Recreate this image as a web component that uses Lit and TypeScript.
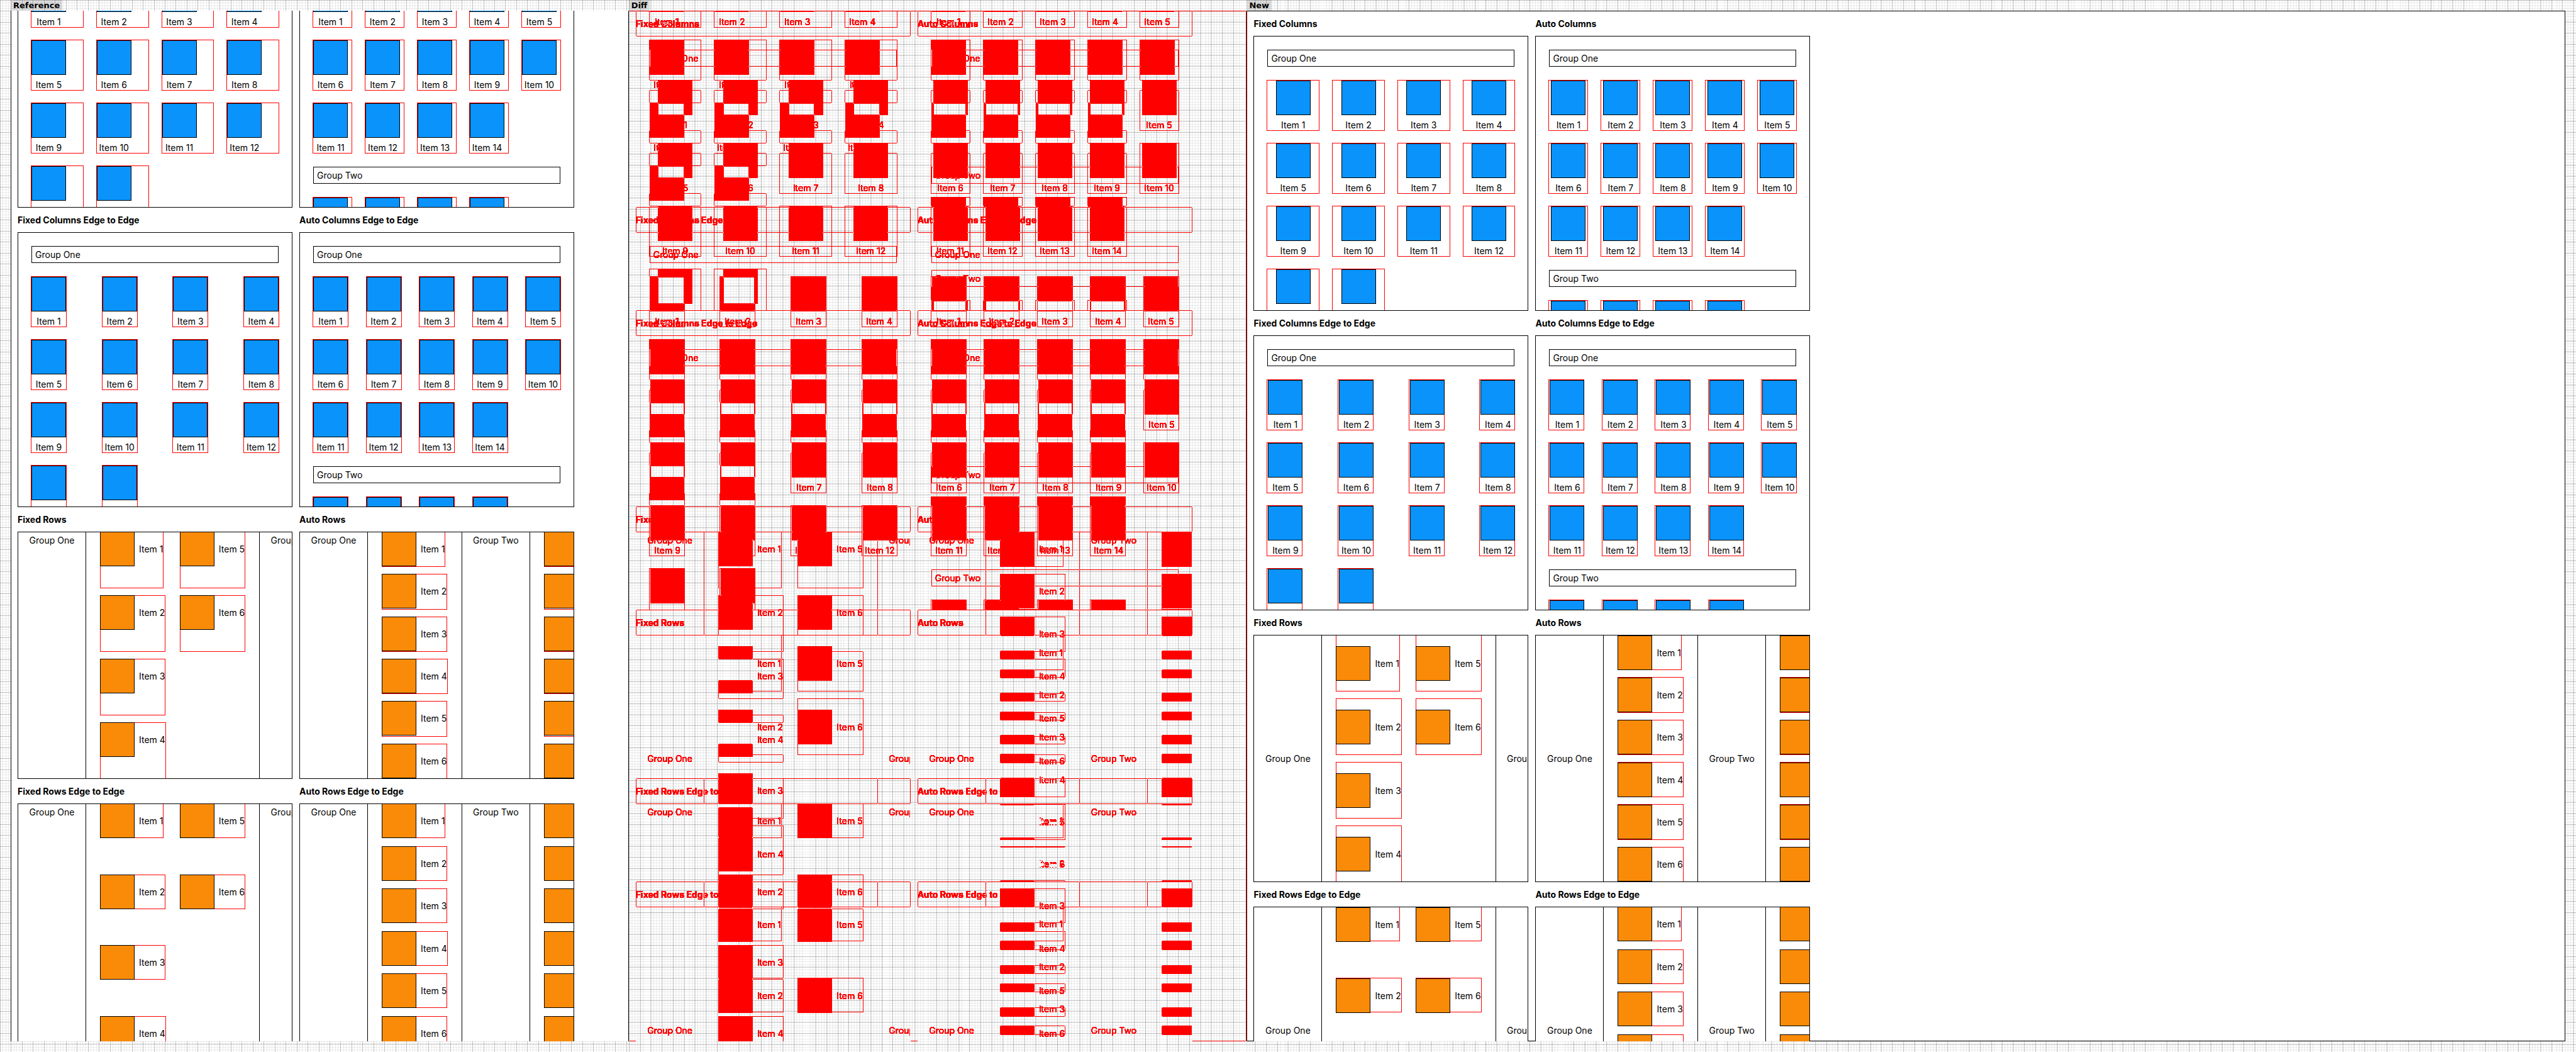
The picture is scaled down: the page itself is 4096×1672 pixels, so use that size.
import { LitElement, html, css, svg } from "lit";
import { customElement, property } from "lit/decorators.js";
import { classMap } from "lit/directives/class-map.js";

type Variant = "start" | "center";

interface Group {
  name: string;
  count: number;
}

interface Panel {
  title: string;
  axis: "columns" | "rows";
  sizing: "fixed" | "auto";
  edge: boolean;
  groups: Group[];
}

const COLUMN_GROUPS: Group[] = [
  { name: "Group One", count: 14 },
  { name: "Group Two", count: 4 },
];

const ROW_GROUPS: Group[] = [
  { name: "Group One", count: 6 },
  { name: "Group Two", count: 6 },
];

const PANELS: Panel[] = [
  { title: "Fixed Columns", axis: "columns", sizing: "fixed", edge: false, groups: COLUMN_GROUPS },
  { title: "Auto Columns", axis: "columns", sizing: "auto", edge: false, groups: COLUMN_GROUPS },
  { title: "Fixed Columns Edge to Edge", axis: "columns", sizing: "fixed", edge: true, groups: COLUMN_GROUPS },
  { title: "Auto Columns Edge to Edge", axis: "columns", sizing: "auto", edge: true, groups: COLUMN_GROUPS },
  { title: "Fixed Rows", axis: "rows", sizing: "fixed", edge: false, groups: ROW_GROUPS },
  { title: "Auto Rows", axis: "rows", sizing: "auto", edge: false, groups: ROW_GROUPS },
  { title: "Fixed Rows Edge to Edge", axis: "rows", sizing: "fixed", edge: true, groups: ROW_GROUPS },
  { title: "Auto Rows Edge to Edge", axis: "rows", sizing: "auto", edge: true, groups: ROW_GROUPS },
];

/** One page of layout samples; `variant` selects how cells align in their items. */
@customElement("layout-sheet")
export class LayoutSheet extends LitElement {
  @property() variant: Variant = "center";

  static styles = css`
    :host {
      display: block;
      box-sizing: border-box;
      background: #fff;
      box-shadow: inset 0 0 0 1px #000;
      padding: 1px 11px;
      font-family: Inter, "Liberation Sans", sans-serif;
      font-size: 14px;
      line-height: 17px;
      color: #000;
    }
    .sheet {
      display: grid;
      grid-template-columns: 437px 437px;
      column-gap: 11px;
    }
    .title {
      margin: 0;
      font-size: 14px;
      line-height: 39px;
      font-weight: 700;
    }
    .panel {
      box-sizing: border-box;
      border: 1px solid #000;
      background: #fff;
      overflow: hidden;
      display: flex;
    }
    .panel.columns {
      height: 437px;
      padding: 21px;
      flex-direction: column;
      gap: 22px;
    }
    .panel.rows {
      height: 393px;
    }
    .group {
      box-sizing: border-box;
      border: 1px solid #000;
      flex: none;
      white-space: nowrap;
    }
    .columns .group {
      padding: 4px 5px;
      line-height: 17px;
    }
    .items {
      display: grid;
      flex: none;
    }
    .columns .items {
      gap: 21px 22px;
      grid-auto-rows: 79px;
      grid-template-columns: repeat(4, 1fr);
    }
    .columns.auto .items {
      grid-template-columns: repeat(5, 1fr);
    }
    .columns.edge .items {
      column-gap: 0;
      justify-content: space-between;
      grid-template-columns: repeat(4, 55px);
    }
    .columns.edge.auto .items {
      grid-template-columns: repeat(5, 55px);
    }

    .lane {
      display: flex;
      gap: 22px;
      flex: none;
      margin: -1px;
    }
    .rows .group {
      width: 109px;
      border-width: 0 1px;
      padding: 5px 0;
      display: flex;
      justify-content: center;
    }
    .rows .items {
      gap: 11px 22px;
      grid-auto-flow: column;
      grid-template-rows: repeat(4, 1fr);
      justify-items: start;
    }
    .rows.auto .items {
      grid-template-rows: repeat(6, 1fr);
    }
    .rows.edge .items {
      row-gap: 0;
      align-content: space-between;
      grid-template-rows: repeat(4, 55px);
    }
    .rows.edge.auto .items {
      grid-template-rows: repeat(6, 55px);
    }
    .center.rows .group {
      align-items: center;
    }

    .item {
      display: flex;
      min-width: 0;
      min-height: 0;
    }
    .columns .item {
      outline: 1px solid #f00;
    }
    .rows .item {
      box-sizing: border-box;
      border: 1px solid #f00;
      align-items: flex-start;
    }
    .center.columns .item {
      justify-content: center;
    }
    .center.columns.edge .item {
      justify-content: flex-start;
      padding-left: 1px;
    }
    .center.rows .item {
      align-items: center;
    }
    .center.rows.edge.fixed .item {
      align-items: flex-start;
    }

    .cell {
      display: flex;
      flex: none;
      align-items: center;
      gap: 7px;
    }
    .columns .cell {
      flex-direction: column;
      width: 55px;
    }
    .rows .cell {
      margin: -1px 0 -1px -1px;
    }
    .center.rows.edge.fixed .cell {
      margin-top: 0;
    }
    .square {
      box-sizing: border-box;
      position: relative;
      width: 55px;
      height: 55px;
      border: 1px solid #000;
      background: #0a93fa;
    }
    .rows .square {
      background: #f98b08;
    }
    .label {
      white-space: nowrap;
    }
  `;

  private renderItems(count: number) {
    return html`<div class="items">
      ${Array.from(
        { length: count },
        (_, i) => html`<div class="item">
          <div class="cell"><span class="square"></span><span class="label">Item ${i + 1}</span></div>
        </div>`,
      )}
    </div>`;
  }

  private renderPanel(panel: Panel) {
    const classes = {
      panel: true,
      [panel.axis]: true,
      [panel.sizing]: true,
      edge: panel.edge,
      [this.variant]: true,
    };
    const groups = panel.groups.map(
      (group) => html`<div class="group">${group.name}</div>
        ${this.renderItems(group.count)}`,
    );
    return html`<section>
      <h2 class="title">${panel.title}</h2>
      <div class=${classMap(classes)}>
        ${panel.axis === "rows" ? html`<div class="lane">${groups}</div>` : groups}
      </div>
    </section>`;
  }

  render() {
    return html`<div class="sheet">${PANELS.map((panel) => this.renderPanel(panel))}</div>`;
  }
}

/** Side-by-side comparison: reference sheet, their difference, and the new sheet. */
@customElement("app-root")
export class AppRoot extends LitElement {
  static styles = css`
    :host {
      display: block;
    }
    .board,
    .rest {
      --major: calc(100vw / 234.5);
      --minor: calc(100vw / 938);
      background-color: #fff;
      background-image: repeating-linear-gradient(to right, rgba(0, 0, 0, 0.18) 0 1px, transparent 1px var(--major)),
        repeating-linear-gradient(to bottom, rgba(0, 0, 0, 0.18) 0 1px, transparent 1px var(--major)),
        repeating-linear-gradient(to right, rgba(0, 0, 0, 0.07) 0 1px, transparent 1px var(--minor)),
        repeating-linear-gradient(to bottom, rgba(0, 0, 0, 0.07) 0 1px, transparent 1px var(--minor));
    }
    .board {
      box-sizing: border-box;
      height: 100vh;
      padding-left: 17px;
      display: grid;
      grid-template-columns: minmax(0, 1800fr) minmax(0, 5672fr);
      overflow: hidden;
    }
    .rest {
      box-sizing: border-box;
      padding-right: 17px;
      display: grid;
      grid-template-columns: minmax(0, 1800fr) minmax(0, 3840fr);
      min-height: 0;
    }
    .pane {
      display: flex;
      flex-direction: column;
      align-items: stretch;
      min-height: 0;
      height: 100vh;
      box-sizing: border-box;
      padding-bottom: 17px;
    }
    .tab {
      align-self: flex-start;
      flex: none;
      margin: 0;
      padding: 0 4px;
      background: rgba(0, 0, 0, 0.13);
      font: 700 13px/17px "DejaVu Sans", sans-serif;
      color: #000;
    }
    .frame {
      flex: 1;
      min-height: 0;
      overflow: hidden;
      display: grid;
      grid-template-columns: minmax(0, 1fr);
      grid-template-rows: minmax(0, 1fr);
    }
    .old,
    .new {
      grid-area: 1 / 1;
    }
    .old {
      align-self: start;
      margin-top: -164px;
    }
    .compare {
      isolation: isolate;
      filter: url(#mark);
    }
    .compare .new {
      mix-blend-mode: difference;
      width: 200%;
    }
    .defs {
      position: absolute;
      width: 0;
      height: 0;
    }
  `;

  render() {
    return html`
      <svg class="defs" aria-hidden="true">
        ${svg`<filter id="mark" x="0" y="0" width="1" height="1" color-interpolation-filters="sRGB">
          <feColorMatrix type="matrix" values="0 0 0 0 1  0 0 0 0 0  0 0 0 0 0  3 3 3 0 -0.1" />
        </filter>`}
      </svg>
      <main class="board">
        <section class="pane">
          <h1 class="tab">Reference</h1>
          <div class="frame"><layout-sheet class="old" variant="start"></layout-sheet></div>
        </section>
        <div class="rest">
          <section class="pane">
            <h1 class="tab">Diff</h1>
            <div class="frame compare">
              <layout-sheet class="old" variant="start"></layout-sheet>
              <layout-sheet class="new" variant="center"></layout-sheet>
            </div>
          </section>
          <section class="pane">
            <h1 class="tab">New</h1>
            <div class="frame"><layout-sheet class="new" variant="center"></layout-sheet></div>
          </section>
        </div>
      </main>
    `;
  }
}
